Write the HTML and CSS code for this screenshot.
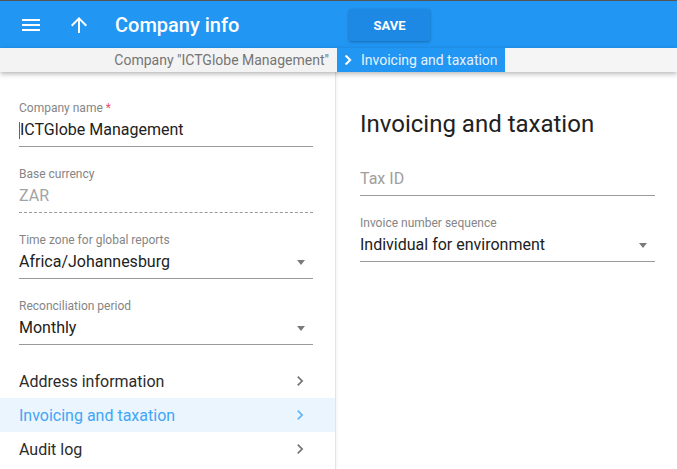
FILE: index.html
```html
<!DOCTYPE html>
<html lang="en">
<head>
<meta charset="utf-8">
<title>Company info</title>
<link rel="stylesheet" href="styles.css">
</head>
<body>
<div class="topline"></div>
<header class="appbar">
  <span class="icon-btn">
    <svg width="24" height="24" viewBox="0 0 24 24"><path fill="#fff" d="M3 18h18v-2H3v2zm0-5h18v-2H3v2zm0-7v2h18V6H3z"/></svg>
  </span>
  <span class="icon-btn">
    <svg width="24" height="24" viewBox="0 0 24 24"><path fill="#fff" d="M4 12l1.41 1.41L11 7.83V20h2V7.83l5.58 5.59L20 12l-8-8-8 8z"/></svg>
  </span>
  <h1 class="title">Company info</h1>
  <button class="save-btn">SAVE</button>
</header>
<nav class="crumbs">
  <span class="crumb">Company "ICTGlobe Management"</span>
  <span class="crumb-active">
    <svg width="20" height="20" viewBox="0 0 24 24"><path fill="#fff" d="M10 6L8.59 7.41 13.17 12l-4.58 4.59L10 18l6-6z" stroke="#fff" stroke-width="0.6"/></svg>
    <span>Invoicing and taxation</span>
  </span>
  <span class="crumb-rest"></span>
</nav>
<main class="content">
  <aside class="side">
    <div class="fields">
      <div class="field">
        <div class="label">Company name <span class="req">*</span></div>
        <div class="value"><span class="caret"></span>ICTGlobe Management</div>
      </div>
      <div class="field field-readonly">
        <div class="label">Base currency</div>
        <div class="value value-muted">ZAR</div>
      </div>
      <div class="field">
        <div class="label">Time zone for global reports</div>
        <div class="value value-select">Africa/Johannesburg<span class="tri"></span></div>
      </div>
      <div class="field">
        <div class="label">Reconciliation period</div>
        <div class="value value-select">Monthly<span class="tri"></span></div>
      </div>
    </div>
    <ul class="menu">
      <li class="menu-item"><span>Address information</span>
        <svg width="20" height="20" viewBox="0 0 24 24"><path fill="#757575" d="M10 6L8.59 7.41 13.17 12l-4.58 4.59L10 18l6-6z"/></svg></li>
      <li class="menu-item menu-item-active"><span>Invoicing and taxation</span>
        <svg width="20" height="20" viewBox="0 0 24 24"><path fill="#64b5f6" d="M10 6L8.59 7.41 13.17 12l-4.58 4.59L10 18l6-6z"/></svg></li>
      <li class="menu-item"><span>Audit log</span>
        <svg width="20" height="20" viewBox="0 0 24 24"><path fill="#757575" d="M10 6L8.59 7.41 13.17 12l-4.58 4.59L10 18l6-6z"/></svg></li>
    </ul>
  </aside>
  <section class="detail">
    <h2 class="heading">Invoicing and taxation</h2>
    <div class="field">
      <div class="label"></div>
      <div class="value value-placeholder">Tax ID</div>
    </div>
    <div class="field">
      <div class="label">Invoice number sequence</div>
      <div class="value value-select">Individual for environment<span class="tri"></span></div>
    </div>
  </section>
</main>
</body>
</html>
```
FILE: styles.css
```css
* { box-sizing: border-box; }
html, body { margin: 0; padding: 0; }
body {
  width: 677px;
  height: 469px;
  overflow: hidden;
  font-family: Roboto, "Noto Sans", Arial, sans-serif;
  background: #fff;
  display: flex;
  flex-direction: column;
}
.topline { height: 1px; background: #555; flex: 0 0 1px; }
.appbar {
  flex: 0 0 47px;
  height: 47px;
  background: #2196f3;
  display: flex;
  align-items: center;
  padding-left: 19px;
  gap: 24px;
}
.icon-btn { width: 24px; height: 24px; display: block; }
.icon-btn svg { display: block; }
.title {
  margin: 0;
  font-size: 20px;
  font-weight: 500;
  color: #fff;
  width: 210px;
}
.save-btn {
  width: 81px;
  height: 32px;
  border: 0;
  border-radius: 2px;
  background: #1e88e5;
  color: #fff;
  font-family: Roboto, Arial, sans-serif;
  font-size: 13px;
  font-weight: 700;
  box-shadow: 0 1px 3px rgba(0,0,0,.3);
  padding: 0;
  margin-top: 1px;
}
.crumbs {
  flex: 0 0 24px;
  height: 24px;
  display: flex;
  background: #f5f5f5;
  position: relative;
  z-index: 2;
  box-shadow: 0 2px 5px rgba(0,0,0,.28);
  font-size: 14px;
  line-height: 24px;
}
.crumb {
  width: 337px;
  text-align: right;
  padding-right: 8px;
  color: #757575;
  background: #f3f3f3;
  box-shadow: 1px 0 1px rgba(0,0,0,.08);
}
.crumb-active {
  background: #2196f3;
  color: #e6f2fd;
  display: flex;
  align-items: center;
  padding: 0 7px 0 1px;
  gap: 3px;
}
.crumb-active svg { display: block; }
.crumb-rest { flex: 1; }
.content {
  flex: 1;
  display: flex;
  min-height: 0;
}
.side {
  width: 336px;
  flex: 0 0 336px;
  border-right: 1px solid #e4e4e4;
  box-shadow: 1px 0 2px rgba(0,0,0,.05);
  padding-top: 28px;
}
.fields {
  padding: 0 22px 0 19px;
  display: flex;
  flex-direction: column;
  gap: 19px;
}
.field { border-bottom: 1px solid #9a9a9a; padding-bottom: 4px; }
.field-readonly { border-bottom: 1px dashed #9a9a9a; }
.label {
  font-size: 12px;
  line-height: 16px;
  height: 16px;
  margin-bottom: 2px;
  color: #858585;
}
.req { color: #f0506e; }
.value {
  font-size: 16px;
  line-height: 24px;
  height: 24px;
  color: #212121;
  display: flex;
  align-items: center;
}
.value-muted { color: #a3a3a3; }
.value-placeholder { color: #9e9e9e; }
.value-select { justify-content: space-between; }
.caret {
  display: inline-block;
  width: 1px;
  height: 17px;
  background: #1976d2;
}
.tri {
  width: 0;
  height: 0;
  border-left: 4.5px solid transparent;
  border-right: 4.5px solid transparent;
  border-top: 5px solid #7b7b7b;
  margin-right: 8px;
}
.menu {
  list-style: none;
  margin: 19px 0 0;
  padding: 0;
}
.menu-item {
  height: 34px;
  display: flex;
  align-items: center;
  justify-content: space-between;
  padding: 0 25px 0 19px;
  font-size: 16px;
  color: #2b2b2b;
}
.menu-item svg { display: block; }
.menu-item-active { background: #eaf5fe; color: #42a5f5; }
.detail {
  flex: 1;
  padding: 36px 22px 0 24px;
  display: flex;
  flex-direction: column;
  gap: 19px;
}
.heading {
  margin: 0 0 -10px;
  font-size: 24px;
  line-height: 32px;
  font-weight: 400;
  color: #212121;
}
```
